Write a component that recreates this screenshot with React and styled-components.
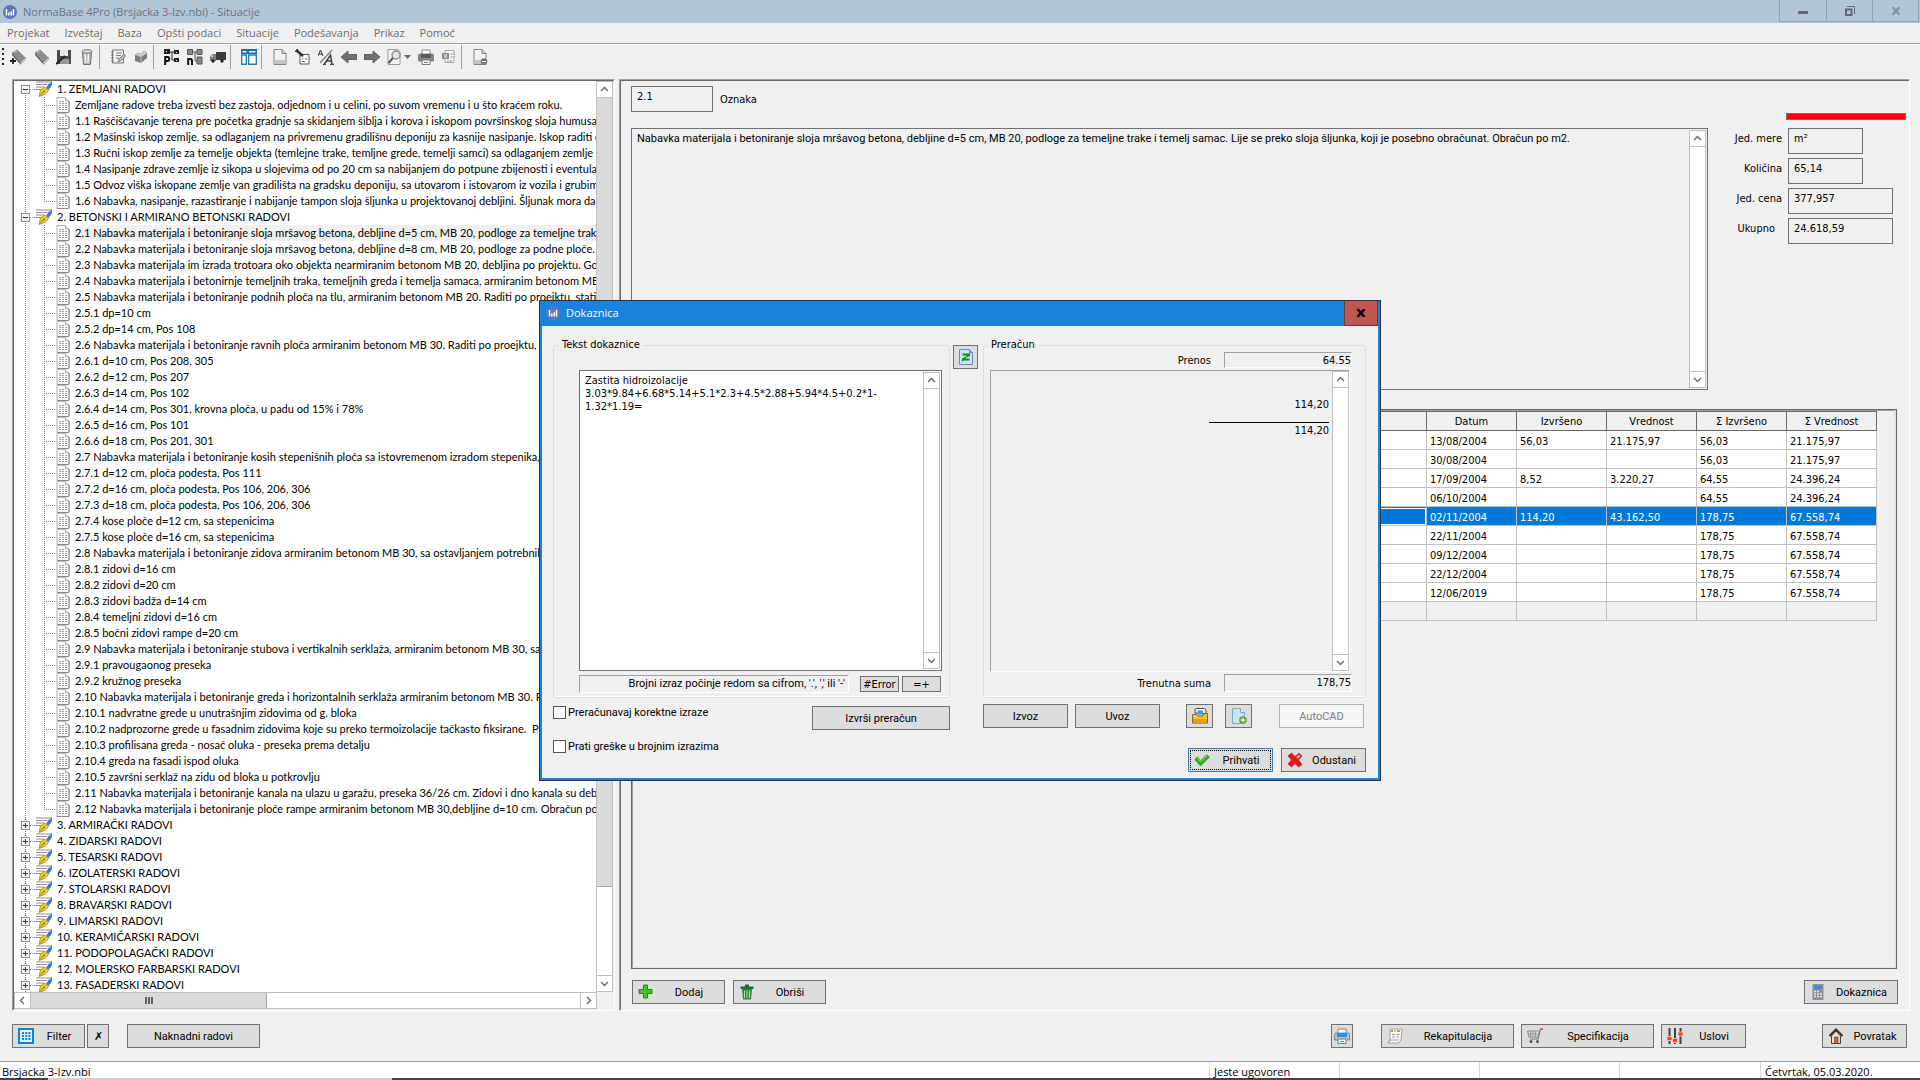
import React from "react";
import styled, { createGlobalStyle, css } from "styled-components";

const GlobalStyle = createGlobalStyle`
  *, *::before, *::after {
    box-sizing: border-box;
  }

  body {
    margin: 0;
    background: #f0f0f0;
    color: #000;
    font-family: "DejaVu Sans Condensed", "DejaVu Sans", sans-serif;
    font-size: 11px;
    line-height: 13px;
    overflow: hidden;
  }

  button, input, textarea {
    margin: 0;
    font-family: inherit;
    font-size: inherit;
    line-height: inherit;
    color: inherit;
    border-radius: 0;
    outline: none;
  }

  svg {
    display: block;
    flex: none;
  }
`;

const uiFont = css`
  font-family: "Open Sans", sans-serif;
`;

const narrowFont = css`
  font-family: Roboto, sans-serif;
`;

/* ---------- window ---------- */

const Window = styled.div`
  height: 100vh;
  display: flex;
  flex-direction: column;
`;

const TitleBar = styled.header`
  ${uiFont}
  flex: none;
  height: 23px;
  display: flex;
  align-items: center;
  gap: 6px;
  padding-left: 3px;
  background: #b2c6d8;
  color: #68747f;
`;

const TitleText = styled.h1`
  flex: 1;
  margin: 0;
  font-size: 11px;
  font-weight: 400;
`;

const WindowButtons = styled.div`
  align-self: flex-start;
  display: flex;
  height: 22px;
  margin-right: 1px;
  border: 1px solid #8fa3b5;
  border-top: 0;
`;

const WindowButton = styled.button`
  width: 46px;
  padding: 0;
  display: flex;
  align-items: center;
  justify-content: center;
  border: 0;
  background: none;

  & + & {
    border-left: 1px solid #8fa3b5;
  }
`;

const MenuBar = styled.nav`
  ${uiFont}
  flex: none;
  height: 21px;
  display: flex;
  align-items: center;
  gap: 15px;
  padding: 0 0 2px 7px;
  border-bottom: 1px solid #a0a0a0;
`;

const MenuItem = styled.button`
  padding: 0;
  border: 0;
  background: none;
  color: #6d6d6d;
`;

const ToolBar = styled.div`
  flex: none;
  height: 24px;
  display: flex;
  align-items: center;
  border-top: 1px solid #fff;
`;

const Grip = styled.span`
  width: 2px;
  height: 18px;
  margin: 0 2px;
  background: repeating-linear-gradient(#222 0 2px, transparent 2px 5px);
`;

const ToolGroup = styled.div`
  display: flex;
  align-items: center;
  height: 24px;
  padding-right: 1px;

  & + & {
    border-left: 1px solid #a0a0a0;
    padding-left: 6px;
  }
`;

const ToolButton = styled.button`
  width: 23px;
  height: 22px;
  padding: 0;
  display: flex;
  align-items: center;
  justify-content: center;
  border: 0;
  background: none;

  ${(p) => p.$wide && css`width: 31px;`}
`;

const Main = styled.main`
  flex: 1;
  min-height: 0;
  display: flex;
  gap: 4px;
  padding: 11px 10px 0 12px;
`;

const Sunken = styled.section`
  border: 1px solid;
  border-color: #a0a0a0 #fff #fff #a0a0a0;
  box-shadow: inset 1px 1px 0 #696969;
  padding: 1px;
  min-width: 0;
`;

/* ---------- buttons ---------- */

const Button = styled.button`
  ${narrowFont}
  flex: none;
  width: ${(p) => p.$w}px;
  height: 24px;
  padding: 0;
  display: flex;
  align-items: center;
  justify-content: center;
  border: 1px solid #707070;
  background: #ddd;
  ${(p) => p.$withIcon && css`padding-left: 5px;`}

  ${(p) => p.$focused && css`
    border-color: #3c7fb1;
    outline: 1px dotted #000;
    outline-offset: -3px;
  `}

  &:disabled {
    border-color: #adb2b5;
    background: #f4f4f4;
    color: #838383;
  }
`;

const ButtonLabel = styled.span`
  flex: 1;
  text-align: center;
`;

const SmallButton = styled(Button)`
  height: 16px;
  font-family: "DejaVu Sans Condensed", sans-serif;
`;

function IconButton({ icon, label, w, ...rest }) {
  return (
    <Button $w={w} $withIcon {...rest}>
      {icon}
      <ButtonLabel>{label}</ButtonLabel>
    </Button>
  );
}

/* ---------- scrollbars ---------- */

const VBar = styled.div`
  flex: none;
  width: 17px;
  display: flex;
  flex-direction: column;
  border: 1px solid #bfbfbf;
  background: #fff;
`;

const HBar = styled.div`
  flex: none;
  width: 583px;
  height: 17px;
  display: flex;
  border: 1px solid #bfbfbf;
  background: #fff;
`;

const ArrowButton = styled.button`
  flex: none;
  width: 16px;
  height: 16px;
  padding: 0;
  display: flex;
  align-items: center;
  justify-content: center;
  border: 0 solid #bfbfbf;
  background: #fff;

  ${VBar} > & {
    width: 15px;
  }
  ${VBar} > &:first-child {
    border-bottom-width: 1px;
  }
  ${VBar} > &:last-child {
    border-top-width: 1px;
  }
  ${HBar} > & {
    height: 15px;
  }
  ${HBar} > &:first-child {
    border-right-width: 1px;
  }
  ${HBar} > &:last-child {
    border-left-width: 1px;
  }
`;

const Track = styled.div`
  flex: 1;
  min-height: 0;
`;

const VThumb = styled.div`
  height: 90%;
  background: #dadada;
  border-bottom: 1px solid #a6a6a6;
`;

const HThumb = styled.div`
  width: 43%;
  height: 100%;
  display: flex;
  align-items: center;
  justify-content: center;
  border-right: 1px solid #a6a6a6;
  background: #dadada;
`;

const chevrons = {
  up: "M1 6 4.5 2.5 8 6",
  down: "M1 3 4.5 6.5 8 3",
  left: "M6 1 2.5 4.5 6 8",
  right: "M3 1 6.5 4.5 3 8",
};

function Arrow({ dir }) {
  return (
    <ArrowButton aria-label={dir}>
      <svg width="9" height="9" fill="none" stroke="#707070" strokeWidth="1.5">
        <path d={chevrons[dir]} />
      </svg>
    </ArrowButton>
  );
}

function VScroll({ thumb }) {
  return (
    <VBar>
      <Arrow dir="up" />
      <Track>{thumb && <VThumb />}</Track>
      <Arrow dir="down" />
    </VBar>
  );
}

/* ---------- tree ---------- */

const TreePanel = styled(Sunken)`
  flex: 0 0 603px;
  display: flex;
  flex-direction: column;
`;

const TreeBody = styled.div`
  flex: 1;
  min-height: 0;
  display: flex;
`;

const TreeList = styled.ul`
  font-family: Lato, sans-serif;
  flex: 1;
  min-width: 0;
  margin: 0;
  padding: 0;
  list-style: none;
  overflow: hidden;
  background: #fff;
`;

const TreeRow = styled.li`
  height: 16px;
  display: flex;
  align-items: center;
  white-space: nowrap;
`;

const vDots = "repeating-linear-gradient(#808080 0 1px, transparent 1px 2px)";
const hDots = "repeating-linear-gradient(90deg, #808080 0 1px, transparent 1px 2px)";

const Trunk = styled.span`
  flex: none;
  width: 22px;
  height: 16px;
  background: ${vDots} 11px 0 / 1px 100% no-repeat;
`;

const ExpanderCell = styled.span`
  flex: none;
  width: 22px;
  height: 16px;
  display: flex;
  align-items: center;
  padding-left: 7px;
  background:
    ${vDots} 11px ${(p) => (p.$first ? "8px" : "0")} / 1px 100% no-repeat,
    ${hDots} 16px 8px / 6px 1px no-repeat;
`;

const Branch = styled.span`
  flex: none;
  width: 20px;
  height: 16px;
  background:
    ${vDots} 8px 0 / 1px ${(p) => (p.$last ? "8px" : "16px")} no-repeat,
    ${hDots} 8px 8px / 11px 1px no-repeat;
`;

const Expander = styled.button`
  width: 9px;
  height: 9px;
  padding: 0;
  border: 1px solid #919191;
  background: #f4f4f4;

  svg {
    width: 7px;
    height: 7px;
  }
`;

const RowText = styled.span`
  flex: 1;
  height: 16px;
  line-height: 16px;
  white-space: pre;
  margin-left: 4px;
  padding-left: 1px;
  ${(p) => p.$selected && css`background: #f0f0f0;`}
`;

const tree = [
  {
    title: "1. ZEMLJANI RADOVI",
    items: [
      "Zemljane radove treba izvesti bez zastoja, odjednom i u celini, po suvom vremenu i u što kraćem roku.",
      "1.1 Raščišćavanje terena pre početka gradnje sa skidanjem šiblja i korova i iskopom površinskog sloja humusa",
      "1.2 Mašinski iskop zemlje, sa odlaganjem na privremenu gradilišnu deponiju za kasnije nasipanje. Iskop raditi od",
      "1.3 Ručni iskop zemlje za temelje objekta (temlejne trake, temljne grede, temelji samci) sa odlaganjem zemlje",
      "1.4 Nasipanje zdrave zemlje iz sikopa u slojevima od po 20 cm sa nabijanjem do potpune zbijenosti i eventulano",
      "1.5 Odvoz viška iskopane zemlje van gradilišta na gradsku deponiju, sa utovarom i istovarom iz vozila i grubim",
      "1.6 Nabavka, nasipanje, razastiranje i nabijanje tampon sloja šljunka u projektovanoj debljini. Šljunak mora da",
    ],
  },
  {
    title: "2. BETONSKI I ARMIRANO BETONSKI RADOVI",
    items: [
      "2.1 Nabavka materijala i betoniranje sloja mršavog betona, debljine d=5 cm, MB 20, podloge za temeljne trake",
      "2.2 Nabavka materijala i betoniranje sloja mršavog betona, debljine d=8 cm, MB 20, podloge za podne ploče.",
      "2.3 Nabavka materijala im izrada trotoara oko objekta nearmiranim betonom MB 20, debljina po projektu. Gornji",
      "2.4 Nabavka materijala i betonirnje temeljnih traka, temeljnih greda i temelja samaca, armiranim betonom MB",
      "2.5 Nabavka materijala i betoniranje podnih ploča na tlu, armiranim betonom MB 20. Raditi po proejktu, statičkom",
      "2.5.1 dp=10 cm",
      "2.5.2 dp=14 cm, Pos 108",
      "2.6 Nabavka materijala i betoniranje ravnih ploča armiranim betonom MB 30. Raditi po proejktu, sa",
      "2.6.1 d=10 cm, Pos 208, 305",
      "2.6.2 d=12 cm, Pos 207",
      "2.6.3 d=14 cm, Pos 102",
      "2.6.4 d=14 cm, Pos 301, krovna ploča, u padu od 15% i 78%",
      "2.6.5 d=16 cm, Pos 101",
      "2.6.6 d=18 cm, Pos 201, 301",
      "2.7 Nabavka materijala i betoniranje kosih stepenišnih ploča sa istovremenom izradom stepenika,",
      "2.7.1 d=12 cm, ploča podesta, Pos 111",
      "2.7.2 d=16 cm, ploča podesta, Pos 106, 206, 306",
      "2.7.3 d=18 cm, ploča podesta, Pos 106, 206, 306",
      "2.7.4 kose ploče d=12 cm, sa stepenicima",
      "2.7.5 kose ploče d=16 cm, sa stepenicima",
      "2.8 Nabavka materijala i betoniranje zidova armiranim betonom MB 30, sa ostavljanjem potrebnih",
      "2.8.1 zidovi d=16 cm",
      "2.8.2 zidovi d=20 cm",
      "2.8.3 zidovi badža d=14 cm",
      "2.8.4 temeljni zidovi d=16 cm",
      "2.8.5 bočni zidovi rampe d=20 cm",
      "2.9 Nabavka materijala i betoniranje stubova i vertikalnih serklaža, armiranim betonom MB 30, sa",
      "2.9.1 pravougaonog preseka",
      "2.9.2 kružnog preseka",
      "2.10 Nabavka materijala i betoniranje greda i horizontalnih serklaža armiranim betonom MB 30. Raditi",
      "2.10.1 nadvratne grede u unutrašnjim zidovima od g. bloka",
      "2.10.2 nadprozorne grede u fasadnim zidovima koje su preko termoizolacije tačkasto fiksirane.  P",
      "2.10.3 profilisana greda - nosač oluka - preseka prema detalju",
      "2.10.4 greda na fasadi ispod oluka",
      "2.10.5 završni serklaž na zidu od bloka u potkrovlju",
      "2.11 Nabavka materijala i betoniranje kanala na ulazu u garažu, preseka 36/26 cm. Zidovi i dno kanala su debljine",
      "2.12 Nabavka materijala i betoniranje ploče rampe armiranim betonom MB 30,debljine d=10 cm. Obračun po m2",
    ],
  },
  { title: "3. ARMIRAČKI RADOVI" },
  { title: "4. ZIDARSKI RADOVI" },
  { title: "5. TESARSKI RADOVI" },
  { title: "6. IZOLATERSKI RADOVI" },
  { title: "7. STOLARSKI RADOVI" },
  { title: "8. BRAVARSKI RADOVI" },
  { title: "9. LIMARSKI RADOVI" },
  { title: "10. KERAMIČARSKI RADOVI" },
  { title: "11. PODOPOLAGAČKI RADOVI" },
  { title: "12. MOLERSKO FARBARSKI RADOVI" },
  { title: "13. FASADERSKI RADOVI" },
];

/* ---------- icons ---------- */

const Icon = ({ children, size = 16, ...rest }) => (
  <svg width={size} height={size} viewBox="0 0 16 16" {...rest}>
    {children}
  </svg>
);

const LogoIcon = () => (
  <Icon size={14}>
    <circle cx="8" cy="8" r="8" fill="#5f74bd" />
    <path d="M4 4.5v7.5M6.7 8.500v3.500M9.400 7v5M12 4.5v7.5" stroke="#fff" strokeWidth="1.700" />
  </Icon>
);

const PenIcon = () => (
  <Icon>
    <path d="M0 1h14M0 3.500h11M0 6h9M0 8.500h6" stroke="#8a8a8a" strokeWidth="1" />
    <path d="M10 7l3.500-5.500L16 0v4l-3.500 5z" fill="#3f74c4" />
    <path d="M13 3l2-2" stroke="#a9c8f0" />
    <path d="M3 15.500 4.500 9l4-3 4 3.500-3.500 4z" fill="#f0c63e" stroke="#b5851c" strokeWidth=".8" />
    <path d="M3.500 15 8 10.500" stroke="#8a6414" strokeWidth=".8" />
    <circle cx="8" cy="10.500" r="1" fill="#8a6414" />
  </Icon>
);

const DocIcon = () => (
  <svg width="14" height="16" viewBox="0 0 14 16">
    <path d="M1 .5h8.500L13 4v11.500H1z" fill="#fcfcfc" stroke="#b0b0b0" />
    <path d="M1 15.500h12M13 4v11.500" stroke="#8c8c8c" />
    <path d="M9.500.5V4H13" fill="#e4e4e4" stroke="#a0a0a0" strokeWidth=".8" />
    <path d="M3 4.500h5M3 6.500h8M3 8.500h8M3 10.500h8M3 12.500h8" stroke="#a0a0a0" strokeDasharray="2 1" />
  </svg>
);

const BookIcon = ({ plus }) => (
  <Icon>
    <path d="M2 3.500 7 .5l8.500 8-5 5z" fill="#8b8b8b" />
    <path d="M2 3.500 10.500 13.500v2L2 6z" fill="#5e5e5e" />
    <path d="M10.500 13.500l5-5v2l-5 5z" fill="#d8d8d8" stroke="#777" strokeWidth=".5" />
    <path d="M4 3.500 7 2" stroke="#c8c8c8" />
    {plus && <path d="M3 9v6M0 12h6" stroke="#222" strokeWidth="1.800" />}
  </Icon>
);

const SaveIcon = () => (
  <Icon>
    <path d="M1 1h14v14H1z" fill="#4b4b4b" />
    <path d="M4 1h8v6H4z" fill="#e6e6e6" />
    <path d="M4 10h9v5H4z" fill="#9a9a9a" />
    <path d="M0 15 9 7" stroke="#222" strokeWidth="2" />
  </Icon>
);

const BinIcon = () => (
  <Icon>
    <path d="M3.500 3h9l-1 12.500h-7z" fill="#b4b4b4" stroke="#6f6f6f" />
    <path d="M6 4l.5 10M9.500 4 9 14" stroke="#f5f5f5" strokeWidth="1.500" />
    <ellipse cx="8" cy="2.500" rx="5" ry="1.800" fill="#ddd" stroke="#6f6f6f" />
  </Icon>
);

const NoteIcon = () => (
  <Icon>
    <path d="M2.500 1h11v13h-11z" fill="#f2f2f2" stroke="#777" />
    <path d="M1 3h3M1 6h3M1 9h3M1 12h3M6 4h6M6 6.500h5M6 9h3" stroke="#777" />
    <path d="M8 13l1-3 5-5 1.500 2-5 5z" fill="#bdbdbd" stroke="#666" strokeWidth=".8" />
  </Icon>
);

const BoxIcon = () => (
  <Icon>
    <path d="M2 6l6 2 6-4v5l-6 5-6-2z" fill="#7c7c7c" />
    <path d="M2 6l3-2 3 1 3-3 3 2-6 4z" fill="#d0d0d0" stroke="#888" strokeWidth=".6" />
    <path d="M8 8v6" stroke="#bbb" />
  </Icon>
);

const NodesIcon = ({ kind }) => (
  <Icon>
    {kind === "p" ? (
      <>
        <path d="M0 0h6v5H0zM10 1h5v4h-5zM10 9h5v4h-5z" fill="#222" />
        <path d="M2 2h1v1H2zM12 3h1v1h-1zM12 11h1v1h-1z" fill="#fff" />
        <path d="M6 3h4M8 3v8h2" stroke="#222" fill="none" />
        <path d="M1.200 7v9M1.200 8h2.500q1.500 0 1.500 2t-1.500 2H2" fill="none" stroke="#111" strokeWidth="2" />
      </>
    ) : (
      <>
        <path d="M.5.500h5v5h-5zM10 .5h5v5h-5zM10 8h5v7h-5z" fill="#8a8a8a" stroke="#555" />
        <path d="M6 3h4M8 3v9h2" stroke="#555" fill="none" />
        <path d="M1.200 16V9M1.200 10h2q1.800 0 1.800 2v4" fill="none" stroke="#111" strokeWidth="2" />
      </>
    )}
  </Icon>
);

const TruckIcon = () => (
  <Icon>
    <path d="M6 3h10v8H6z" fill="#3c3c3c" />
    <path d="M0 7l3-2h3v7H0z" fill="#7d7d7d" />
    <path d="M1 7l2-1v2H1z" fill="#ddd" />
    <circle cx="3" cy="12" r="1.700" fill="#222" />
    <circle cx="12" cy="12" r="1.700" fill="#222" />
  </Icon>
);

const LayoutIcon = () => (
  <Icon>
    <path d="M0 0h16v5H0z" fill="#1c6f9f" />
    <path d="M1.500 2h4v1.500h-4zM8 2h6.500v1.500H8z" fill="#d5efff" />
    <path d="M.7 6h4.600v9.300H.7zM7.700 6h7.600v9.300H7.700z" fill="#fff" stroke="#2b7fb0" strokeWidth="1.400" />
  </Icon>
);

const PageIcon = ({ minus }) => (
  <Icon>
    <path d="M2 .5h8l4 4v11H2z" fill="#f3f3f3" stroke="#808080" />
    <path d="M2.500 11h11v4h-11z" fill="#c6c6c6" />
    <path d="M10 .5v4h4" fill="#ccc" stroke="#808080" />
    {minus && (
      <>
        <circle cx="12" cy="12.500" r="3.300" fill="#777" />
        <path d="M10 12.500h4" stroke="#fff" />
      </>
    )}
  </Icon>
);

const EditIcon = () => (
  <Icon>
    <path d="M5 5.500h9v9.500H5z" fill="#fff" stroke="#555" />
    <path d="M7 10h1M10 10h2M7 12.500h3" stroke="#555" />
    <path d="M1 1l7 6" stroke="#333" strokeWidth="2.500" />
    <path d="M0 3l3-3" stroke="#333" />
  </Icon>
);

const FontIcon = () => (
  <Icon>
    <path d="M2 14 14 1" stroke="#777" strokeWidth="1.200" />
    <path d="M0 7l2.500-6L5 7M1 5h3" fill="none" stroke="#333" />
    <path d="M5 15.500h3M6.500 15l6-9 1.500 9M9 12h4.500M12 15.500h4" fill="none" stroke="#444" strokeWidth="1.500" />
  </Icon>
);

const ArrowIcon = ({ right }) => (
  <Icon transform={right ? "rotate(180)" : undefined}>
    <path d="M0 8l7-6v3.500h9v5H7V14z" fill="#707070" stroke="#4d4d4d" strokeWidth=".8" />
  </Icon>
);

const PreviewIcon = () => (
  <svg width="24" height="16" viewBox="0 0 24 16">
    <path d="M1 .5h10l2 2v13H1z" fill="#f5f5f5" stroke="#999" />
    <circle cx="9" cy="6" r="4" fill="#e3e3e3" stroke="#888" strokeWidth="1.300" />
    <path d="M6 9l-4.500 5" stroke="#555" strokeWidth="2.200" />
    <path d="M17 6h7l-3.500 4z" fill="#666" />
  </svg>
);

const PrinterIcon = ({ color }) => (
  <Icon>
    <path d="M4 1h8v5H4z" fill="#fff" stroke="#888" />
    <path d="M.5 6.500q0-1.500 1.500-1.500h12q1.500 0 1.500 1.500V12H.5z" fill={color ? "#b9c3cd" : "#8a8a8a"} stroke="#666" strokeWidth=".7" />
    <path d="M3 5h10v4H3z" fill={color || "#5a5a5a"} />
    <path d="M4 11h8v4.500H4z" fill="#fff" stroke="#777" />
    <path d="M6 13.500h4" stroke={color || "#777"} />
  </Icon>
);

const ExportIcon = () => (
  <Icon>
    <path d="M4 1.500h9v12H4z" fill="#f4f4f4" stroke="#aaa" />
    <path d="M1 4h7v6H1z" fill="#8b8b8b" />
    <path d="M3 6h3M3 8h3" stroke="#fff" />
    <path d="M9.500 5h4M9.500 8h4M6 12h5" stroke="#888" strokeDasharray="2 1" />
  </Icon>
);

const PlusIcon = () => (
  <Icon>
    <path d="M5.500 1h4v4.500H14v4H9.500V14h-4V9.500H1v-4h4.500z" fill="#4bbf33" stroke="#1d8a14" />
  </Icon>
);

const TrashIcon = () => (
  <Icon>
    <path d="M3 5h10l-1 10.500H4z" fill="#2c8a3c" />
    <path d="M1.500 2.500h13V5h-13zM6 .5h4v2H6z" fill="#1f6d2e" />
    <path d="M5.500 6.500v7.500M8 6.500v7.500M10.500 6.500v7.500" stroke="#bfe6c2" strokeWidth=".9" />
  </Icon>
);

const CalcIcon = () => (
  <Icon>
    <path d="M2.500 0h11v16h-11z" fill="#8d9096" />
    <path d="M4 1.500h8v3.500H4z" fill="#3f88d8" />
    <path d="M4 7.500h8M4 10h8M4 12.500h8" stroke="#e8e8e8" strokeWidth="1.500" strokeDasharray="2 1" />
    <path d="M10 7.500h2" stroke="#d85858" strokeWidth="1.500" />
  </Icon>
);

const FilterIcon = () => (
  <Icon>
    <path d="M0 0h16v16H0z" fill="#0a84d8" />
    <path d="M2 2h12v12H2z" fill="#e8f3fb" />
    <path d="M4 5h8.500M4 8h8.500M4 11h8.500" stroke="#0a84d8" strokeWidth="2" strokeDasharray="2 1.200" />
  </Icon>
);

const ListIcon = () => (
  <Icon>
    <path d="M3 1h12l-1 11-2 3H1l2-3z" fill="#f6f6f6" stroke="#a3a3a3" />
    <path d="M4 3h2" stroke="#e34c3c" strokeWidth="1.500" />
    <path d="M7 3h2" stroke="#e9b824" strokeWidth="1.500" />
    <path d="M10 3h3" stroke="#51ac45" strokeWidth="1.500" />
    <path d="M5 6.500h3M5 9h3M9.500 6.500h3M9.500 9h2" stroke="#999" />
    <path d="M1 15l2-3h9" fill="none" stroke="#a3a3a3" />
  </Icon>
);

const CartIcon = () => (
  <Icon>
    <path d="M15.500 1h-2L11 11H3" fill="none" stroke="#777" strokeWidth="1.200" />
    <path d="M.5 3h12l-1.500 6H2z" fill="#ddd" stroke="#888" />
    <path d="M3.500 3v6M6 3v6M8.500 3v6M1 6h11" stroke="#888" strokeWidth=".8" />
    <path d="M14.500.5h1.500v1.500h-1.500z" fill="#d33" />
    <circle cx="4" cy="13.500" r="1.500" fill="#555" />
    <circle cx="10.500" cy="13.500" r="1.500" fill="#555" />
  </Icon>
);

const SlidersIcon = () => (
  <Icon>
    <path d="M2.500 0v16M8 0v16M13.500 0v16" stroke="#3b4248" strokeWidth="2" />
    <path d="M0 8.500h5v4H0zM5.500 10.500h5v4h-5zM11 4h5v4h-5z" fill="#f0441e" stroke="#ddd" strokeWidth=".8" />
  </Icon>
);

const HomeIcon = () => (
  <Icon>
    <path d="M3.500 8v7.500h9V8L8 3z" fill="#e9dfd0" stroke="#4a4038" />
    <path d="M1.500 8 8 1.500 14.500 8" fill="none" stroke="#39332f" strokeWidth="2" />
    <path d="M6.500 9h3.500v6.500H6.500z" fill="#c8692a" stroke="#4a4038" strokeWidth=".6" />
  </Icon>
);

const RefreshIcon = () => (
  <Icon>
    <path d="M1.500.5h10l3 3v12h-13z" fill="#cfe0fa" stroke="#6c86c4" />
    <path d="M11.500.5v3h3" fill="#86a4e0" stroke="#6c86c4" />
    <path d="M4.500 5.500h6l-2 2.500M11.500 10.500h-6l2-2.500" fill="none" stroke="#0a9414" strokeWidth="1.800" />
    <path d="M8.500 7.500H12V3.500zM7.500 9H4v4z" fill="#0a9414" />
  </Icon>
);

const FolderIcon = () => (
  <Icon>
    <path d="M3 5V1.500L4.500.500h8L14 2v4z" fill="#f4f4f4" stroke="#444" />
    <path d="M5.500 2.500h5.500v4H5.500z" fill="#3f9fd8" />
    <path d="M.5 6.500h4l1 1.500 5 0 1-2.500h4V15H.5z" fill="#f9c21d" stroke="#6a4a0c" strokeWidth=".8" />
    <path d="M1 11h14v3.500H1z" fill="#e9a20c" />
    <path d="M1.500 8h3" stroke="#fff0a8" />
  </Icon>
);

const NewPageIcon = () => (
  <Icon>
    <path d="M1.500.5h8l4 4v11h-12z" fill="#c8e4f6" stroke="#7fa8c4" />
    <path d="M9.500.5v4h4" fill="#eef8ff" stroke="#7fa8c4" />
    <circle cx="12" cy="12" r="3.800" fill="#62a51c" />
    <path d="M12 9.700v4.600M9.700 12h4.600" stroke="#fff" strokeWidth="1.400" />
  </Icon>
);

const CheckIcon = () => (
  <Icon>
    <path d="M.8 7.500 3.500 5 6.500 8.500 13 2.800 15.500 5 6.500 14z" fill="#34b01c" stroke="#1d8010" strokeWidth=".6" />
    <path d="M3.500 6 6.500 9.500 13 4" fill="none" stroke="#8be070" />
  </Icon>
);

const CrossIcon = () => (
  <Icon>
    <path d="M1 4 4.500 1 8 4.500 12 1l3 3-3.500 4 3.500 4.500-3.500 2.500L8 11.500 4.500 15 1 12l3.500-4z" fill="#e3181c" stroke="#b60d10" strokeWidth=".6" />
    <path d="M9 5l3-2.500L13.500 4 11 7z" fill="#f7a0a0" />
  </Icon>
);

/* ---------- details ---------- */

const DetailPanel = styled(Sunken)`
  flex: 1;
  display: flex;
  flex-direction: column;
  padding: 6px 0 6px 11px;
`;

const DetailTop = styled.div`
  display: flex;
`;

const DetailText = styled.div`
  flex: 1;
  min-width: 0;
  display: flex;
  flex-direction: column;
  gap: 16px;
`;

const DetailValues = styled.div`
  flex: 0 0 201px;
  display: flex;
  flex-direction: column;
  gap: 4px;
  padding-top: 27px;
`;

const Limit = styled.div`
  align-self: flex-end;
  width: 120px;
  height: 7px;
  margin: 0 3px 4px 0;
  border: 1px solid #707070;
  background: #f00;
`;

const FieldRow = styled.label`
  display: flex;
  gap: 6px;
`;

const FieldLabel = styled.span`
  width: ${(p) => (p.$short ? 67 : 74)}px;
  margin-right: ${(p) => (p.$short ? 7 : 0)}px;
  padding-top: 4px;
  text-align: right;
`;

const Field = styled.input`
  width: ${(p) => p.$w}px;
  height: 26px;
  padding: 0 5px 6px;
  border: 1px solid #707070;
  background: #f0f0f0;
`;

const CodeRow = styled.label`
  display: flex;
  align-items: center;
  gap: 7px;
`;

const MemoFrame = styled.div`
  display: flex;
  height: ${(p) => p.$h}px;
  padding: 1px;
  border: 1px solid #707070;
  background: ${(p) => p.$bg || "#f0f0f0"};
`;

const Memo = styled.textarea`
  flex: 1;
  min-width: 0;
  padding: 2px 4px;
  border: 0;
  background: none;
  resize: none;
  overflow: hidden;
  ${(p) => p.readOnly && narrowFont}
`;

const GridFrame = styled.div`
  flex: 1;
  min-height: 0;
  margin: 19px 12px 11px 0;
  border: 1px solid #696969;
  overflow: hidden;
`;

const GridInner = styled.div`
  height: 100%;
  border: 1px solid;
  border-color: #a0a0a0 #e3e3e3 #e3e3e3 #a0a0a0;
  border-right-width: 2px;
  padding-right: 17px;
`;

const Table = styled.table`
  width: 100%;
  table-layout: fixed;
  border-collapse: separate;
  border-spacing: 0;
`;

const Th = styled.th`
  width: ${(p) => (p.$fill ? "auto" : "90px")};
  height: 20px;
  padding: 0;
  font-weight: 400;
  text-align: center;
  border: 1px solid #696969;
  border-left: 0;
`;

const Td = styled.td`
  height: 19px;
  padding: 2px 3px 0;
  border: 1px solid #c0c0c0;
  border-width: 0 1px 1px 0;
`;

const Tr = styled.tr`
  background: #fff;
  ${(p) => p.$selected && css`
    background: #0078d7;
    color: #fff;

    ${Td}:first-child {
      outline: 1px solid #fff;
      outline-offset: -2px;
    }
  `}
  ${(p) => p.$empty && css`background: #f0f0f0;`}
`;

const PanelActions = styled.div`
  display: flex;
  gap: 8px;
  padding: 0 11px 0 1px;
`;

const Spacer = styled.span`
  flex: ${(p) => (p.$w ? `0 0 ${p.$w}px` : "1")};
`;

const rows = [
  ["13/08/2004", "56,03", "21.175,97", "56,03", "21.175,97"],
  ["30/08/2004", "", "", "56,03", "21.175,97"],
  ["17/09/2004", "8,52", "3.220,27", "64,55", "24.396,24"],
  ["06/10/2004", "", "", "64,55", "24.396,24"],
  ["02/11/2004", "114,20", "43.162,50", "178,75", "67.558,74"],
  ["22/11/2004", "", "", "178,75", "67.558,74"],
  ["09/12/2004", "", "", "178,75", "67.558,74"],
  ["22/12/2004", "", "", "178,75", "67.558,74"],
  ["12/06/2019", "", "", "178,75", "67.558,74"],
  ["", "", "", "", ""],
];

/* ---------- bottom ---------- */

const BottomBar = styled.div`
  flex: none;
  height: 50px;
  display: flex;
  align-items: center;
  padding: 0 13px 0 12px;
`;

const BottomGroup = styled.div`
  display: flex;
  gap: ${(p) => p.$gap}px;
`;

const StatusBar = styled.footer`
  ${uiFont}
  flex: none;
  height: 19px;
  display: flex;
  padding-bottom: 2px;
  border-top: 1px solid #a0a0a0;
  background:
    linear-gradient(90deg, #444 48px, #d0d0d0 48px 392px, #444 392px) bottom / 100% 2px no-repeat,
    #fff;
`;

const StatusCell = styled.span`
  flex: ${(p) => (p.$w ? `0 0 ${p.$w}px` : "1")};
  padding: 3px 4px 0 2px;
  line-height: 13px;

  & + & {
    border-left: 1px solid #d7d7d7;
    padding-left: 4px;
  }
`;

/* ---------- dialog ---------- */

const Overlay = styled.div`
  position: fixed;
  inset: 0;
  display: grid;
  place-items: center;
  padding-top: 1px;
`;

const DialogBox = styled.div`
  width: 842px;
  border: 1px solid #2d3338;
  background: #1a82d8;
  padding: 0 2px 2px;
`;

const DialogTitle = styled.div`
  ${uiFont}
  height: 25px;
  display: flex;
  align-items: center;
  gap: 6px;
  padding: 0 0 2px 4px;
  color: #fff;
`;

const CloseButton = styled.button`
  width: 34px;
  height: 25px;
  align-self: flex-start;
  flex: none;
  margin-left: auto;
  padding: 0;
  display: flex;
  align-items: center;
  justify-content: center;
  border: 1px solid #6e3b3b;
  border-top: 0;
  background: #c1564e;
`;

const DialogBody = styled.div`
  display: flex;
  padding: 12px 12px 6px 11px;
  background: #f0f0f0;
`;

const Column = styled.div`
  width: ${(p) => p.$w}px;
  display: flex;
  flex-direction: column;
`;

const Group = styled.fieldset`
  min-width: 0;
  height: 360px;
  margin: 0;
  padding: ${(p) => p.$pad};
  display: flex;
  flex-direction: column;
  border: 1px solid #d5dfe5;
  border-radius: 3px;
  box-shadow: inset 0 -1px 0 #fff;
`;

const Legend = styled.legend`
  height: 14px;
  padding: 0 3px;
  margin-left: ${(p) => p.$x || 0}px;
`;

const HintRow = styled.div`
  display: flex;
  align-items: center;
  gap: 3px;
  margin-top: 4px;
`;

const Readout = styled.output`
  width: ${(p) => p.$w}px;
  height: ${(p) => p.$h}px;
  padding-right: ${(p) => p.$pad}px;
  line-height: 15px;
  text-align: right;
  white-space: nowrap;
  border: 1px solid;
  border-color: #a0a0a0 #fff #fff #a0a0a0;
`;

const Hint = styled(Readout)`
  ${narrowFont}
  margin-right: 8px;
`;

const RefreshButton = styled(Button)`
  margin: 7px 5px 0 3px;
`;

const SumRow = styled.div`
  display: flex;
  align-items: center;
  justify-content: flex-end;
  gap: 13px;
`;

const ResultFrame = styled.div`
  display: flex;
  height: 302px;
  margin: 2px 2px 2px 0;
  border: 1px solid;
  border-color: #a0a0a0 #fff #fff #a0a0a0;
`;

const Results = styled.div`
  flex: 1;
  padding: 27px 3px 0 0;
  display: flex;
  flex-direction: column;
  align-items: flex-end;
`;

const Total = styled.span`
  width: 120px;
  margin-top: 11px;
  padding-top: 1px;
  border-top: 1px solid #000;
  text-align: right;
`;

const Options = styled.div`
  display: flex;
  justify-content: space-between;
  align-items: flex-start;
  padding-top: 8px;
`;

const Checks = styled.div`
  ${narrowFont}
  display: flex;
  flex-direction: column;
  gap: 21px;
`;

const CheckLabel = styled.label`
  display: flex;
  align-items: center;
  gap: 2px;
`;

const Check = styled.input`
  appearance: none;
  width: 13px;
  height: 13px;
  border: 1px solid #555;
  background: #fff;
`;

const ActionRow = styled.div`
  display: flex;
  align-items: center;
  padding-top: 6px;
`;

const ConfirmRow = styled.div`
  display: flex;
  justify-content: flex-end;
  gap: 8px;
  margin-top: 20px;
`;

const menu = ["Projekat", "Izveštaj", "Baza", "Opšti podaci", "Situacije", "Podešavanja", "Prikaz", "Pomoć"];

const tools = [
  [<BookIcon plus />, <BookIcon />, <SaveIcon />, <BinIcon />],
  [<NoteIcon />, <BoxIcon />],
  [<NodesIcon kind="p" />, <NodesIcon kind="n" />, <TruckIcon />],
  [<LayoutIcon />],
  [<PageIcon />, <EditIcon />, <FontIcon />, <ArrowIcon />, <ArrowIcon right />, <PreviewIcon />, <PrinterIcon />, <ExportIcon />],
  [<PageIcon minus />],
];

function Tree() {
  return (
    <TreePanel>
      <TreeBody>
        <TreeList>
          {tree.map((section, s) => (
            <React.Fragment key={section.title}>
              <TreeRow>
                <ExpanderCell $first={s === 0}>
                  <Expander aria-label={section.title}>
                    <svg viewBox="0 0 7 7" stroke="#333">
                      <path d={section.items ? "M1 3.500h5" : "M1 3.500h5M3.500 1v5"} />
                    </svg>
                  </Expander>
                </ExpanderCell>
                <PenIcon />
                <RowText>{section.title}</RowText>
              </TreeRow>
              {section.items?.map((item, i) => (
                <TreeRow key={item}>
                  <Trunk />
                  <Branch $last={i === section.items.length - 1} />
                  <DocIcon />
                  <RowText $selected={item.startsWith("2.1 ")}>{item}</RowText>
                </TreeRow>
              ))}
            </React.Fragment>
          ))}
        </TreeList>
        <VScroll thumb />
      </TreeBody>
      <HBar>
        <Arrow dir="left" />
        <Track>
          <HThumb>
            <svg width="8" height="7" stroke="#606060" strokeWidth="2">
              <path d="M1 0v7M4 0v7M7 0v7" />
            </svg>
          </HThumb>
        </Track>
        <Arrow dir="right" />
      </HBar>
    </TreePanel>
  );
}

function Details() {
  return (
    <DetailPanel>
      <DetailTop>
        <DetailText>
          <CodeRow>
            <Field $w={82} defaultValue="2.1" />
            Oznaka
          </CodeRow>
          <MemoFrame $h={262}>
            <Memo
              aria-label="Opis"
              readOnly
              defaultValue="Nabavka materijala i betoniranje sloja mršavog betona, debljine d=5 cm, MB 20, podloge za temeljne trake i temelj samac. Lije se preko sloja šljunka, koji je posebno obračunat. Obračun po m2."
            />
            <VScroll />
          </MemoFrame>
        </DetailText>
        <DetailValues>
          <Limit />
          <FieldRow>
            <FieldLabel>Jed. mere</FieldLabel>
            <Field $w={75} defaultValue="m²" />
          </FieldRow>
          <FieldRow>
            <FieldLabel>Količina</FieldLabel>
            <Field $w={75} defaultValue="65,14" />
          </FieldRow>
          <FieldRow>
            <FieldLabel>Jed. cena</FieldLabel>
            <Field $w={105} defaultValue="377,957" />
          </FieldRow>
          <FieldRow>
            <FieldLabel $short>Ukupno</FieldLabel>
            <Field $w={105} defaultValue="24.618,59" />
          </FieldRow>
        </DetailValues>
      </DetailTop>
      <GridFrame>
        <GridInner>
          <Table>
            <thead>
              <tr>
                <Th $fill />
                <Th>Datum</Th>
                <Th>Izvršeno</Th>
                <Th>Vrednost</Th>
                <Th>Σ Izvršeno</Th>
                <Th>Σ Vrednost</Th>
              </tr>
            </thead>
            <tbody>
              {rows.map((row, i) => (
                <Tr key={i} $selected={i === 4} $empty={i === 9}>
                  <Td />
                  {row.map((cell, c) => (
                    <Td key={c}>{cell}</Td>
                  ))}
                </Tr>
              ))}
            </tbody>
          </Table>
        </GridInner>
      </GridFrame>
      <PanelActions>
        <IconButton w={93} icon={<PlusIcon />} label="Dodaj" />
        <IconButton w={93} icon={<TrashIcon />} label="Obriši" />
        <Spacer />
        <IconButton w={94} icon={<CalcIcon />} label="Dokaznica" />
      </PanelActions>
    </DetailPanel>
  );
}

function Dialog() {
  return (
    <Overlay>
      <DialogBox role="dialog" aria-label="Dokaznica">
        <DialogTitle>
          <LogoIcon />
          Dokaznica
          <CloseButton aria-label="Zatvori">
            <svg width="10" height="8" stroke="#000" strokeWidth="2.500">
              <path d="M1.500 0 8.500 8M8.500 0 1.500 8" />
            </svg>
          </CloseButton>
        </DialogTitle>
        <DialogBody>
          <Column $w={397}>
            <Group $pad="18px 7px 4px 25px">
              <Legend $x={-20}>Tekst dokaznice</Legend>
              <MemoFrame $h={301} $bg="#fff">
                <Memo
                  aria-label="Tekst dokaznice"
                  defaultValue={"Zastita hidroizolacije\n3.03*9.84+6.68*5.14+5.1*2.3+4.5*2.88+5.94*4.5+0.2*1-\n1.32*1.19="}
                />
                <VScroll />
              </MemoFrame>
              <HintRow>
                <Hint $w={270} $h={18} $pad={3}>Brojni izraz počinje redom sa cifrom, '.', ',' ili '-'</Hint>
                <SmallButton $w={39}>#Error</SmallButton>
                <SmallButton $w={39}>=+</SmallButton>
              </HintRow>
            </Group>
            <Options>
              <Checks>
                <CheckLabel>
                  <Check type="checkbox" />
                  Preračunavaj korektne izraze
                </CheckLabel>
                <CheckLabel>
                  <Check type="checkbox" />
                  Prati greške u brojnim izrazima
                </CheckLabel>
              </Checks>
              <Button $w={138}>Izvrši preračun</Button>
            </Options>
          </Column>
          <RefreshButton $w={25} aria-label="Osveži">
            <RefreshIcon />
          </RefreshButton>
          <Column $w={383}>
            <Group $pad="0 13px 4px 6px">
              <Legend $x={-2}>Preračun</Legend>
              <SumRow>
                Prenos
                <Readout $w={128} $h={16} $pad={0}>64.55</Readout>
              </SumRow>
              <ResultFrame>
                <Results>
                  <span>114,20</span>
                  <Total>114,20</Total>
                </Results>
                <VScroll />
              </ResultFrame>
              <SumRow>
                Trenutna suma
                <Readout $w={128} $h={18} $pad={0}>178,75</Readout>
              </SumRow>
            </Group>
            <ActionRow>
              <Button $w={85}>Izvoz</Button>
              <Spacer $w={7} />
              <Button $w={85}>Uvoz</Button>
              <Spacer $w={26} />
              <Button $w={27} aria-label="Otvori"><FolderIcon /></Button>
              <Spacer $w={12} />
              <Button $w={27} aria-label="Nova"><NewPageIcon /></Button>
              <Spacer $w={27} />
              <Button $w={85} disabled>AutoCAD</Button>
            </ActionRow>
            <ConfirmRow>
              <IconButton w={85} $focused icon={<CheckIcon />} label="Prihvati" />
              <IconButton w={85} icon={<CrossIcon />} label="Odustani" />
            </ConfirmRow>
          </Column>
        </DialogBody>
      </DialogBox>
    </Overlay>
  );
}

export default function App() {
  return (
    <>
      <GlobalStyle />
      <Window>
        <TitleBar>
          <LogoIcon />
          <TitleText>NormaBase 4Pro (Brsjacka 3-Izv.nbi) - Situacije</TitleText>
          <WindowButtons>
            <WindowButton aria-label="Umanji">
              <svg width="10" height="10"><path d="M0 5h10v3H0z" fill="#5d6b78" /></svg>
            </WindowButton>
            <WindowButton aria-label="Vrati">
              <svg width="10" height="10" fill="none" stroke="#5d6b78">
                <path d="M1 3.500h5.500V9H1z" strokeWidth="2" />
                <path d="M2 .5h7.500V8" />
              </svg>
            </WindowButton>
            <WindowButton aria-label="Zatvori prozor">
              <svg width="10" height="8" stroke="#8496a6" strokeWidth="2.200">
                <path d="M1.500 0 8.500 8M8.500 0 1.500 8" />
              </svg>
            </WindowButton>
          </WindowButtons>
        </TitleBar>
        <MenuBar>
          {menu.map((item) => (
            <MenuItem key={item}>{item}</MenuItem>
          ))}
        </MenuBar>
        <ToolBar>
          <Grip />
          {tools.map((group, g) => (
            <ToolGroup key={g}>
              {group.map((icon, i) => (
                <ToolButton key={i} $wide={icon.type === PreviewIcon} aria-label={`Alat ${g + 1}.${i + 1}`}>
                  {icon}
                </ToolButton>
              ))}
            </ToolGroup>
          ))}
        </ToolBar>
        <Main>
          <Tree />
          <Details />
        </Main>
        <BottomBar>
          <BottomGroup $gap={2}>
            <IconButton w={73} icon={<FilterIcon />} label="Filter" />
            <Button $w={22}>✗</Button>
          </BottomGroup>
          <Spacer $w={18} />
          <Button $w={133}>Naknadni radovi</Button>
          <Spacer />
          <Button $w={22} aria-label="Štampaj"><PrinterIcon color="#2c94d8" /></Button>
          <Spacer $w={28} />
          <BottomGroup $gap={7}>
            <IconButton w={133} icon={<ListIcon />} label="Rekapitulacija" />
            <IconButton w={133} icon={<CartIcon />} label="Specifikacija" />
            <IconButton w={85} icon={<SlidersIcon />} label="Uslovi" />
          </BottomGroup>
          <Spacer $w={76} />
          <IconButton w={85} icon={<HomeIcon />} label="Povratak" />
        </BottomBar>
        <StatusBar>
          <StatusCell>Brsjacka 3-Izv.nbi</StatusCell>
          <StatusCell $w={130}>Jeste ugovoren</StatusCell>
          <StatusCell $w={140} />
          <StatusCell $w={140} />
          <StatusCell $w={141} />
          <StatusCell $w={160}>Četvrtak, 05.03.2020.</StatusCell>
        </StatusBar>
      </Window>
      <Dialog />
    </>
  );
}
